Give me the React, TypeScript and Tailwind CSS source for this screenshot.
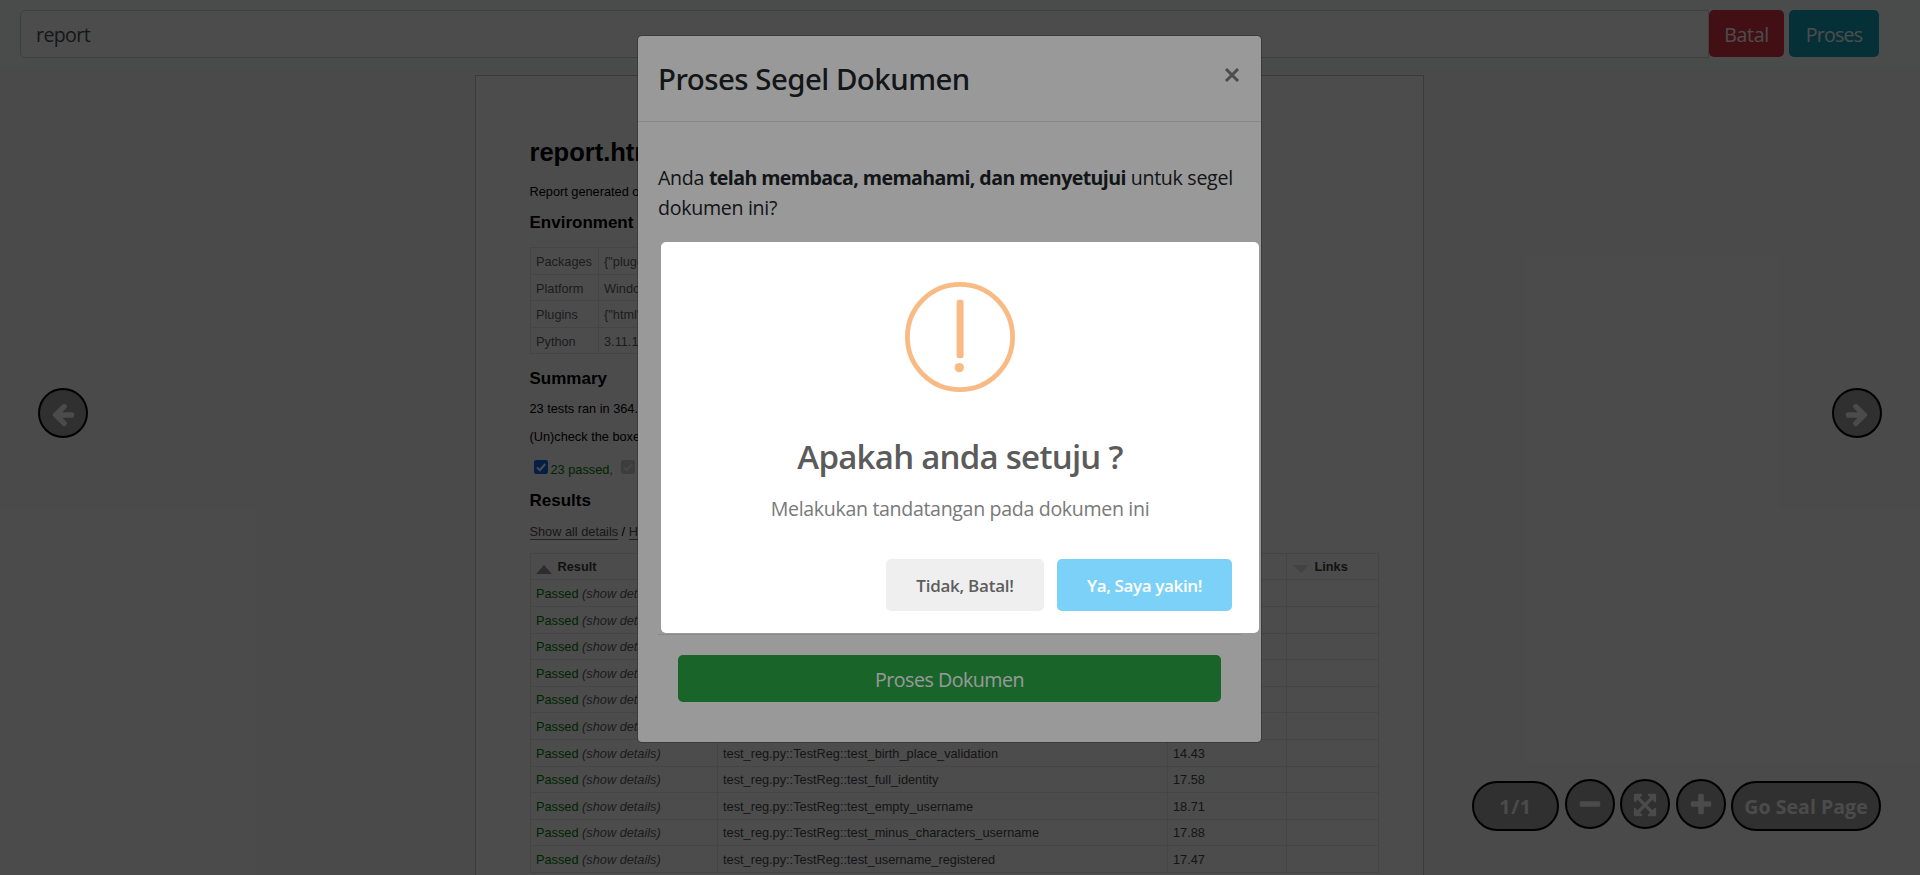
import React from "react";

const ICONS = {
  left: "M1664 896v128q0 53-32.5 90.5t-84.5 37.5h-704l293 294q38 36 38 90t-38 90l-75 76q-37 37-90 37-52 0-91-37l-651-652q-37-37-37-90 0-52 37-91l651-650q38-38 91-38 52 0 90 38l75 74q38 38 38 91t-38 91l-293 293h704q52 0 84.5 37.5t32.5 90.5z",
  right: "M1600 960q0 54-37 91l-651 651q-39 37-91 37-51 0-90-37l-75-75q-38-38-38-91t38-91l293-293h-704q-52 0-84.5-37.5t-32.5-90.5v-128q0-53 32.5-90.5t84.5-37.5h704l-293-294q-38-36-38-90t38-90l75-75q38-38 90-38 53 0 91 38l651 651q37 35 37 90z",
  minus: "M1600 736v192q0 40-28 68t-68 28h-1216q-40 0-68-28t-28-68v-192q0-40 28-68t68-28h1216q40 0 68 28t28 68z",
  plus: "M1600 736v192q0 40-28 68t-68 28h-416v416q0 40-28 68t-68 28h-192q-40 0-68-28t-28-68v-416h-416q-40 0-68-28t-28-68v-192q0-40 28-68t68-28h416v-416q0-40 28-68t68-28h192q40 0 68 28t28 68v416h416q40 0 68 28t28 68z",
  expand: "M1411 541l-355 355 355 355 144-144q29-31 70-14 39 17 39 59v448q0 26-19 45t-45 19h-448q-42 0-59-40-17-39 14-69l144-144-355-355-355 355 144 144q31 30 14 69-17 40-59 40h-448q-26 0-45-19t-19-45v-448q0-42 40-59 39-17 69 14l144 144 355-355-355-355-144 144q-19 19-45 19-12 0-24-5-40-17-40-59v-448q0-26 19-45t45-19h448q42 0 59 40 17 39-14 69l-144 144 355 355 355-355-144-144q-31-30-14-69 17-40 59-40h448q26 0 45 19t19 45v448q0 42-39 59-13 5-25 5-26 0-45-19z",
};

function RoundButton({ icon, className = "" }: { icon: keyof typeof ICONS; className?: string }) {
  return (
    <button className={`flex size-[50px] shrink-0 items-center justify-center rounded-full border-2 border-black bg-[#a0a0a0] text-[#fafafa] ${className}`}>
      <svg viewBox="0 0 1792 1792" className="size-[26px] fill-current">
        <path d={ICONS[icon]} />
      </svg>
    </button>
  );
}

const environment = [
  ["Packages", '{"pluggy":'],
  ["Platform", "Windows"],
  ["Plugins", '{"html":'],
  ["Python", "3.11.1"],
];

const results = [
  ["", ""],
  ["", ""],
  ["", ""],
  ["", ""],
  ["", ""],
  ["", ""],
  ["test_reg.py::TestReg::test_birth_place_validation", "14.43"],
  ["test_reg.py::TestReg::test_full_identity", "17.58"],
  ["test_reg.py::TestReg::test_empty_username", "18.71"],
  ["test_reg.py::TestReg::test_minus_characters_username", "17.88"],
  ["test_reg.py::TestReg::test_username_registered", "17.47"],
];

function Check({ on }: { on: boolean }) {
  return (
    <svg viewBox="0 0 14 14" className="size-[14px]">
      <rect width="14" height="14" rx="2.2" fill={on ? "#0a6be0" : "#cccccc"} />
      <path d="M3 7.4l2.8 2.8L11.2 4" fill="none" stroke={on ? "#ffffff" : "#efefef"} strokeWidth="2" />
    </svg>
  );
}

function Report() {
  return (
    <main className="ml-[475px] mt-[7px] h-[960px] w-[949px] border border-[#c4c4c4] bg-white pl-[53.5px] pr-[43px] pt-[61px] font-['Liberation_Sans',sans-serif] text-[12.76px] leading-[20px] text-black">
      <h1 className="text-[25.5px] font-bold leading-[30px]">report.html</h1>
      <p className="mt-[15px]">Report generated on</p>
      <h2 className="mt-[11px] text-[17px] font-bold">Environment</h2>
      <div className="mt-[14px] w-[600px] border-l border-t border-[#e6e6e6] text-[#606060]">
        {environment.map(([name, value]) => (
          <div key={name} className="flex h-[26.6px] border-b border-[#e6e6e6]">
            <span className="w-[68px] border-r border-[#e6e6e6] pl-[5.5px] pt-[4px]">{name}</span>
            <span className="pl-[5.5px] pt-[4px]">{value}</span>
          </div>
        ))}
      </div>
      <h2 className="mt-[15px] text-[17px] font-bold">Summary</h2>
      <p className="mt-[10px]">23 tests ran in 364.</p>
      <p className="mt-[8px]">(Un)check the boxes</p>
      <div className="mt-[13px] flex h-[20px] pl-[4px]">
        <Check on />
        <span className="ml-[3px] text-[#008000]">23 passed</span>
        <span className="mr-[8px] text-[#666666]">,</span>
        <Check on={false} />
      </div>
      <h2 className="mt-[10.5px] text-[17px] font-bold">Results</h2>
      <div className="mt-[11.5px] flex gap-[3.5px] text-[#505050]">
        <span className="h-[17.5px] border-b border-[#777777]">Show all details</span>
        <span className="text-black">/</span>
        <span className="h-[17.5px] border-b border-[#777777]">Hide</span>
      </div>
      <div className="mt-[10.4px] w-[849px] border-l border-t border-[#e6e6e6] text-[#484848]">
        <div className="grid h-[26.6px] grid-cols-[187px_450px_119px_92.5px] border-b border-[#e6e6e6] font-bold text-[#3c3c3c]">
          <span className="flex border-r border-[#e6e6e6] pl-[5px] pt-[3px]">
            <i className="mr-[6px] mt-[8px] h-0 border-x-8 border-b-9 border-x-transparent border-b-[#999999]" />
            Result
          </span>
          <span className="border-r border-[#e6e6e6]" />
          <span className="border-r border-[#e6e6e6]" />
          <span className="flex border-r border-[#e6e6e6] pl-[6px] pt-[3px]">
            <i className="mr-[6px] mt-[8px] h-0 border-x-8 border-t-8 border-x-transparent border-t-[#dddddd]" />
            Links
          </span>
        </div>
        {results.map(([name, time], i) => (
          <div key={i} className="grid h-[26.6px] grid-cols-[187px_450px_119px_92.5px] border-b border-[#e6e6e6]">
            <span className="border-r border-[#e6e6e6] pl-[5.5px] pt-[3.6px]">
              <span className="text-[#008000]">Passed</span> <em className="text-[#606060]">(show details)</em>
            </span>
            <span className="border-r border-[#e6e6e6] pl-[5.5px] pt-[3.6px]">{name}</span>
            <span className="border-r border-[#e6e6e6] pl-[5.5px] pt-[3.6px]">{time}</span>
            <span className="border-r border-[#e6e6e6]" />
          </div>
        ))}
      </div>
    </main>
  );
}

function SealModal() {
  return (
    <section className="absolute left-[637px] top-[35px] flex h-[708px] w-[625px] flex-col rounded-[5px] border border-black/20 bg-white bg-clip-padding text-[#212529]">
      <header className="flex h-[86px] items-start justify-between border-b border-[#dee2e6] pl-5 pr-[21px]">
        <h5 className="mt-[21px] font-['Noto_Sans',sans-serif] text-[29.4px] font-medium leading-[45px] tracking-[-0.51px]">Proses Segel Dokumen</h5>
        <button className="pt-[31px] text-[#7f7f7f]">
          <svg viewBox="0 0 16 16" className="size-4">
            <path d="M2 2l12 12M14 2L2 14" fill="none" stroke="currentColor" strokeWidth="3" />
          </svg>
        </button>
      </header>
      <p className="mt-[41px] h-[60px] pl-5 text-[19.6px] leading-[30px] tracking-[-0.3px]">
        Anda <b className="tracking-[-0.59px]">telah membaca, memahami, dan menyetujui</b> untuk segel
        <br />
        dokumen ini?
      </p>
      <div className="ml-5 mr-5 mt-[411px] border-t border-black/10" />
      <button className="mx-10 mt-[20px] h-[47px] shrink-0 rounded-[5px] bg-[#28a745] pt-[2px] text-[19.6px] leading-[45px] tracking-[-0.48px] text-white">Proses Dokumen</button>
    </section>
  );
}

function ConfirmAlert() {
  return (
    <section className="absolute left-[661px] top-[242px] flex h-[391px] w-[598px] flex-col items-center rounded-[5px] bg-white">
      <svg viewBox="0 0 110 110" className="mt-[40px] size-[110px] shrink-0">
        <circle cx="55" cy="55" r="52.6" fill="none" stroke="#f9bb86" strokeWidth="4.8" />
        <rect x="51.6" y="17.8" width="7" height="58.4" rx="2.2" fill="#f9bb86" />
        <circle cx="54.3" cy="85.6" r="4.7" fill="#f9bb86" />
      </svg>
      <h2 className="mt-[41px] text-[33px] font-semibold leading-[48px] tracking-[-0.75px] text-[#5b5b5b]">Apakah anda setuju ?</h2>
      <p className="mt-[13px] text-[19.6px] leading-[30px] tracking-[-0.34px] text-[#797979]">Melakukan tandatangan pada dokumen ini</p>
      <div className="mt-[35px] flex gap-[13px] self-end pr-[27px] text-[17px] font-semibold leading-[50px]">
        <button className="h-[52px] w-[158px] rounded-[5px] bg-[#efefef] pt-[2px] tracking-[-0.25px] text-[#5e5e5e]">Tidak, Batal!</button>
        <button className="h-[52px] w-[175px] rounded-[5px] bg-[#7cd1f9] pt-[2px] tracking-[-0.36px] text-white">Ya, Saya yakin!</button>
      </div>
    </section>
  );
}

export default function App() {
  return (
    <div className="relative h-[875px] w-full overflow-hidden bg-[#f9f9f9] font-['Open_Sans',sans-serif]">
      <header className="flex h-[68px] bg-[#f5fffa] pl-5 pt-[10px] text-[19.6px]">
        <div className="h-12 w-[1689px] rounded-l-[5px] border border-[#ced4da] bg-white pl-[15px] pt-px leading-[46px] tracking-[-0.63px] text-[#495057]">report</div>
        <button className="h-[47px] w-[75px] rounded-[5px] bg-[#dc3545] pt-[2px] leading-[45px] tracking-[-0.35px] text-white">Batal</button>
        <button className="ml-[5px] h-[47px] w-[90px] rounded-[5px] bg-[#17a2b8] pt-[2px] leading-[45px] tracking-[-0.76px] text-white">Proses</button>
      </header>
      <Report />
      <RoundButton icon="left" className="absolute left-[38px] top-[388px] pt-[2px]" />
      <RoundButton icon="right" className="absolute left-[1832px] top-[388px] pt-[2px]" />
      <div className="absolute left-[1472px] top-[779px] flex text-[19.6px] font-bold leading-[47px] text-[#fafafa]">
        <span className="mt-[2px] h-[50px] w-[87px] rounded-full border-2 border-black bg-[#a0a0a0] text-center tracking-[0.6px]">1/1</span>
        <RoundButton icon="minus" className="ml-[6px] pt-[2px]" />
        <RoundButton icon="expand" className="ml-[5px] pt-[2px]" />
        <RoundButton icon="plus" className="ml-[6px] pt-[2px]" />
        <span className="ml-[5px] mt-[2px] h-[50px] w-[150px] whitespace-nowrap rounded-full border-2 border-black bg-[#a0a0a0] text-center">Go Seal Page</span>
      </div>
      <div className="absolute inset-0 bg-black/50" />
      <SealModal />
      <div className="absolute inset-0 bg-black/40" />
      <ConfirmAlert />
    </div>
  );
}
